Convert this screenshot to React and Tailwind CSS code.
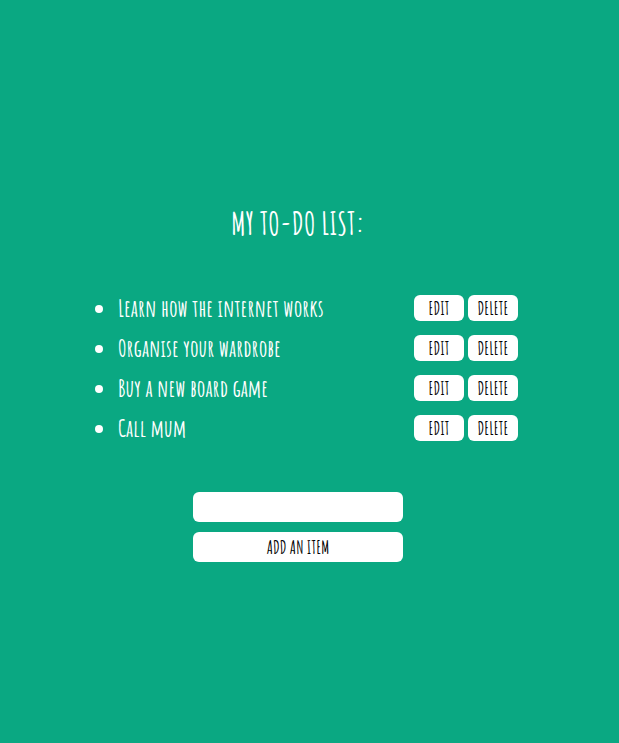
import { useState } from "react";

const initialItems = [
  "Learn how the internet works",
  "Organise your wardrobe",
  "Buy a new board game",
  "Call mum",
];

function SmallButton({ children, ...props }) {
  return (
    <button
      type="button"
      className="h-[26px] w-[50px] rounded-md bg-white text-center text-lg leading-none font-bold text-black"
      {...props}
    >
      {children}
    </button>
  );
}

export default function App() {
  const [items, setItems] = useState(initialItems);
  const [text, setText] = useState("");

  const addItem = (event) => {
    event.preventDefault();
    if (!text.trim()) return;
    setItems([...items, text.trim()]);
    setText("");
  };

  const editItem = (index) => {
    setText(items[index]);
    setItems(items.filter((_, i) => i !== index));
  };

  return (
    <main className="flex min-h-screen flex-col items-center justify-center bg-[#0aa882] pt-[22px] pr-[23px] font-['Amatic_SC','Liberation_Sans_Narrow','Liberation_Sans',sans-serif] text-white">
      <h1 className="text-[32px] leading-10 font-bold">MY TO-DO LIST:</h1>

      <ul className="mt-[45px] w-full max-w-[440px] pl-[17px]">
        {items.map((item, index) => (
          <li key={item} className="flex h-10 items-center">
            <span className="mt-0.5 mr-[15px] size-2 shrink-0 rounded-full bg-white" />
            <span className="grow text-2xl leading-10 font-bold">
              {item}
            </span>
            <span className="flex shrink-0 gap-1">
              <SmallButton aria-label={`Edit ${item}`} onClick={() => editItem(index)}>
                EDIT
              </SmallButton>
              <SmallButton
                aria-label={`Delete ${item}`}
                onClick={() => setItems(items.filter((_, i) => i !== index))}
              >
                DELETE
              </SmallButton>
            </span>
          </li>
        ))}
      </ul>

      <form onSubmit={addItem} className="mt-11 flex w-[210px] flex-col gap-2.5">
        <input
          type="text"
          aria-label="New item"
          value={text}
          onChange={(event) => setText(event.target.value)}
          className="h-[30px] rounded-md bg-white px-2 text-lg font-bold text-black outline-none"
        />
        <button
          type="submit"
          className="h-[30px] rounded-md bg-white text-lg leading-none font-bold text-black"
        >
          ADD AN ITEM
        </button>
      </form>
    </main>
  );
}
